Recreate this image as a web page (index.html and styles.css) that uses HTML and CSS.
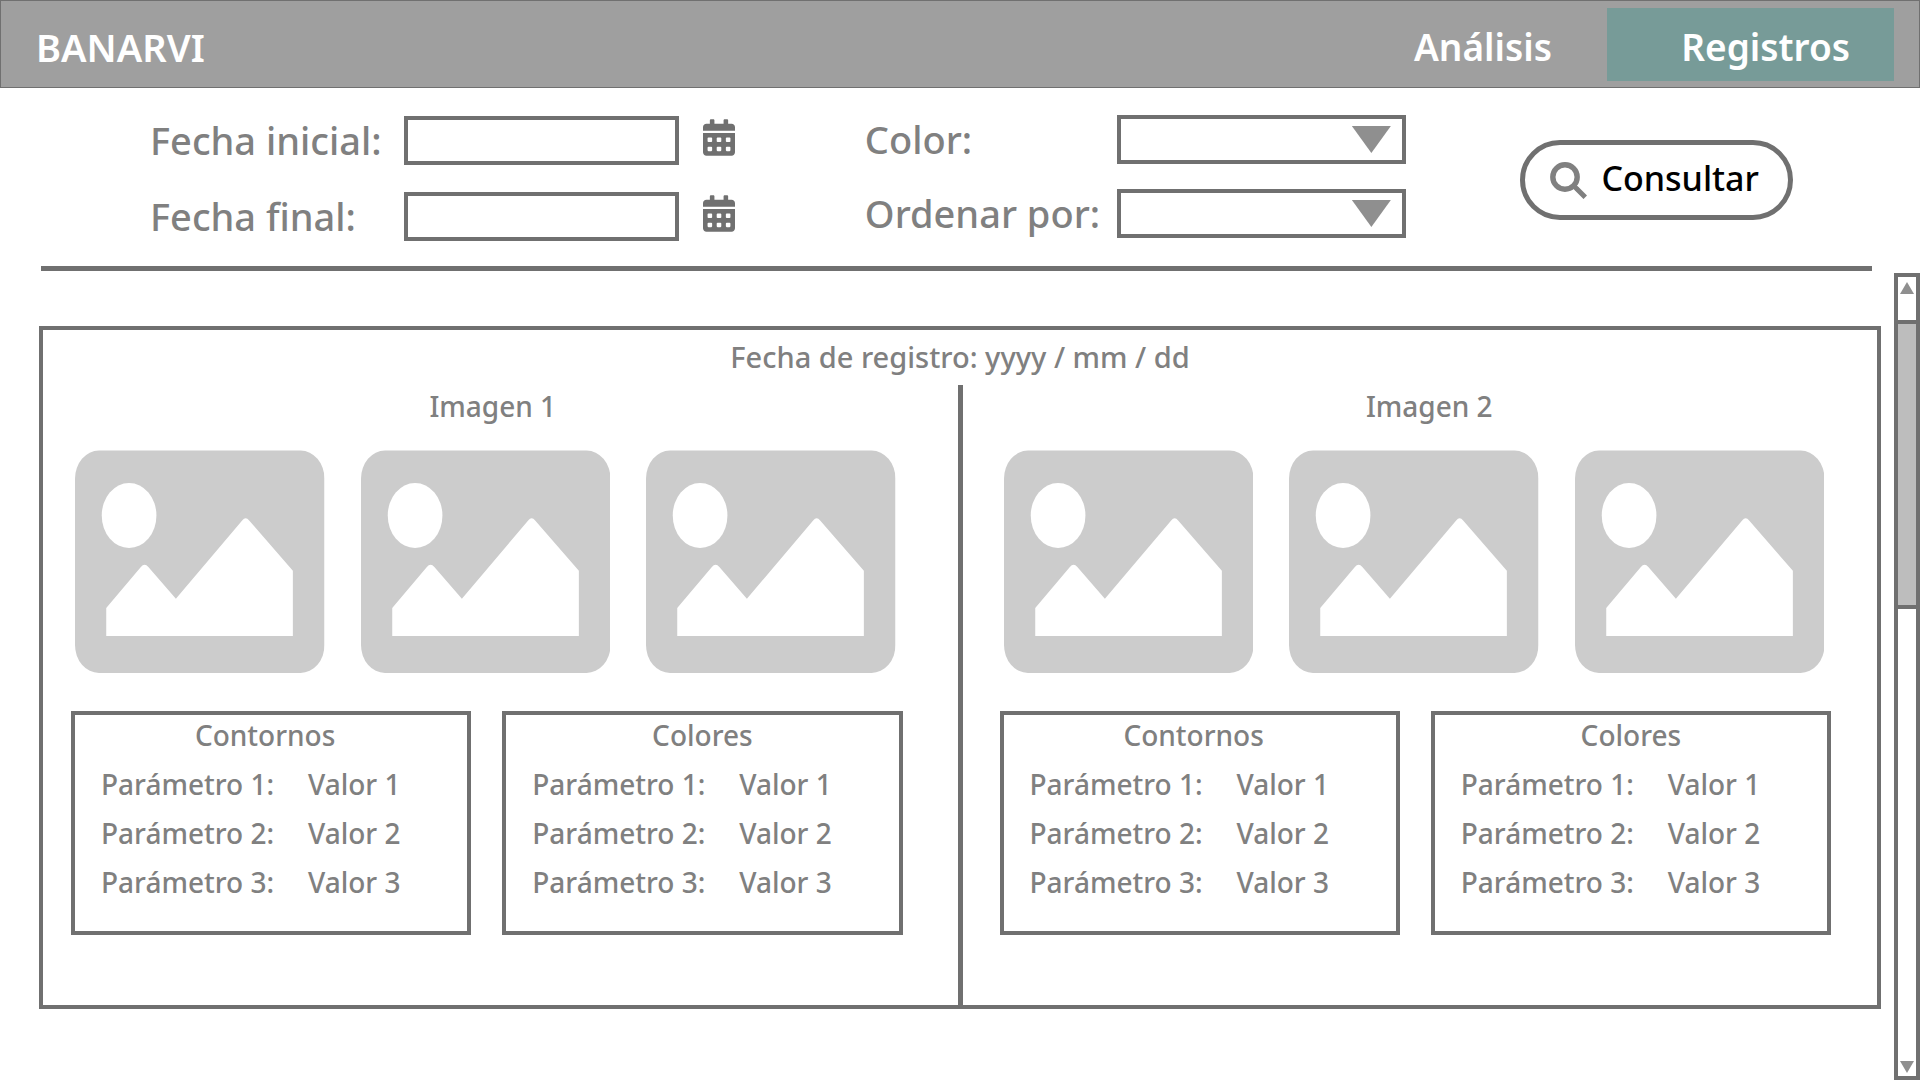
FILE: index.html
```
<!DOCTYPE html>
<html lang="es">
<head>
  <meta charset="utf-8">
  <meta name="viewport" content="width=device-width, initial-scale=1">
  <title>BANARVI - Registros</title>
  <link rel="stylesheet" href="styles.css">
</head>
<body>
  <svg class="sprite" aria-hidden="true">
    <symbol id="calendar" viewBox="0 0 448 512">
      <path d="M0 464c0 26.500 21.500 48 48 48h352c26.500 0 48-21.500 48-48V192H0v272zm320-196c0-6.600 5.400-12 12-12h40c6.600 0 12 5.400 12 12v40c0 6.600-5.400 12-12 12h-40c-6.600 0-12-5.400-12-12v-40zm0 128c0-6.600 5.400-12 12-12h40c6.600 0 12 5.400 12 12v40c0 6.600-5.400 12-12 12h-40c-6.600 0-12-5.400-12-12v-40zM192 268c0-6.600 5.400-12 12-12h40c6.600 0 12 5.400 12 12v40c0 6.600-5.400 12-12 12h-40c-6.600 0-12-5.400-12-12v-40zm0 128c0-6.600 5.400-12 12-12h40c6.600 0 12 5.400 12 12v40c0 6.600-5.400 12-12 12h-40c-6.600 0-12-5.400-12-12v-40zM64 268c0-6.600 5.400-12 12-12h40c6.600 0 12 5.400 12 12v40c0 6.600-5.400 12-12 12H76c-6.600 0-12-5.400-12-12v-40zm0 128c0-6.600 5.400-12 12-12h40c6.600 0 12 5.400 12 12v40c0 6.600-5.400 12-12 12H76c-6.600 0-12-5.400-12-12v-40zM400 64h-48V16c0-8.800-7.200-16-16-16h-32c-8.800 0-16 7.200-16 16v48H160V16c0-8.800-7.200-16-16-16h-32c-8.800 0-16 7.200-16 16v48H48C21.500 64 0 85.500 0 112v48h448v-48c0-26.500-21.500-48-48-48z"/>
    </symbol>
    <symbol id="picture" viewBox="0 0 250 223" preserveAspectRatio="none">
      <rect y="0.600" width="250" height="222.400" rx="24" ry="28" fill="#ccc"/>
      <ellipse cx="54.200" cy="65.500" rx="27.400" ry="32.500" fill="#fff"/>
      <path fill="#fff" d="M31.300 158 66 117Q69.700 112.500 73.500 117L101.100 148.700 167.500 70.500Q171 66 174.500 70.500L218.300 120.700V186H31.300Z"/>
    </symbol>
  </svg>

  <header class="topbar">
    <a class="brand" href="#">BANARVI</a>
    <nav class="nav">
      <a class="nav-link" href="#">Análisis</a>
      <a class="nav-link nav-link--active" href="#" aria-current="page">Registros</a>
    </nav>
  </header>

  <form class="filters">
    <div class="fields fields--dates">
      <label for="start">Fecha inicial:</label>
      <input class="box" id="start" type="text">
      <button class="icon-button" type="button" aria-label="Elegir fecha inicial"><svg class="calendar-icon"><use href="#calendar"/></svg></button>
      <label for="end">Fecha final:</label>
      <input class="box" id="end" type="text">
      <button class="icon-button" type="button" aria-label="Elegir fecha final"><svg class="calendar-icon"><use href="#calendar"/></svg></button>
    </div>
    <div class="fields fields--options">
      <label for="color">Color:</label>
      <div class="select"><select class="box" id="color"><option></option></select></div>
      <label for="order">Ordenar por:</label>
      <div class="select"><select class="box" id="order"><option></option></select></div>
    </div>
    <div class="actions">
      <button class="submit" type="submit">
        <svg class="search-icon" viewBox="0 0 37 37" aria-hidden="true">
          <circle cx="15" cy="15" r="12.200" fill="none" stroke="currentColor" stroke-width="5.400"/>
          <path d="M23 23 28 28" fill="none" stroke="currentColor" stroke-width="4"/>
          <path d="M27.500 27.500 33.500 33.500" fill="none" stroke="currentColor" stroke-width="5" stroke-linecap="square"/>
        </svg>
        <span class="submit-text">Consultar</span>
      </button>
    </div>
  </form>
  <hr class="rule">

  <div class="results">
    <main class="records">
      <article class="record">
        <h1 class="record-title">Fecha de registro: yyyy / mm / dd</h1>
        <div class="captures">
          <section class="capture capture--first">
            <h2 class="capture-title">Imagen 1</h2>
            <div class="pictures">
              <svg class="picture" role="img"><use href="#picture"/></svg>
              <svg class="picture" role="img"><use href="#picture"/></svg>
              <svg class="picture" role="img"><use href="#picture"/></svg>
            </div>
            <div class="cards">
              <section class="card card--contours">
                <h3 class="card-title">Contornos</h3>
                <table class="params">
                  <tr><th scope="row">Parámetro 1:</th><td>Valor 1</td></tr>
                  <tr><th scope="row">Parámetro 2:</th><td>Valor 2</td></tr>
                  <tr><th scope="row">Parámetro 3:</th><td>Valor 3</td></tr>
                </table>
              </section>
              <section class="card">
                <h3 class="card-title">Colores</h3>
                <table class="params">
                  <tr><th scope="row">Parámetro 1:</th><td>Valor 1</td></tr>
                  <tr><th scope="row">Parámetro 2:</th><td>Valor 2</td></tr>
                  <tr><th scope="row">Parámetro 3:</th><td>Valor 3</td></tr>
                </table>
              </section>
            </div>
          </section>
          <div class="divider"></div>
          <section class="capture capture--second">
            <h2 class="capture-title">Imagen 2</h2>
            <div class="pictures">
              <svg class="picture" role="img"><use href="#picture"/></svg>
              <svg class="picture" role="img"><use href="#picture"/></svg>
              <svg class="picture" role="img"><use href="#picture"/></svg>
            </div>
            <div class="cards">
              <section class="card card--contours">
                <h3 class="card-title">Contornos</h3>
                <table class="params">
                  <tr><th scope="row">Parámetro 1:</th><td>Valor 1</td></tr>
                  <tr><th scope="row">Parámetro 2:</th><td>Valor 2</td></tr>
                  <tr><th scope="row">Parámetro 3:</th><td>Valor 3</td></tr>
                </table>
              </section>
              <section class="card">
                <h3 class="card-title">Colores</h3>
                <table class="params">
                  <tr><th scope="row">Parámetro 1:</th><td>Valor 1</td></tr>
                  <tr><th scope="row">Parámetro 2:</th><td>Valor 2</td></tr>
                  <tr><th scope="row">Parámetro 3:</th><td>Valor 3</td></tr>
                </table>
              </section>
            </div>
          </section>
        </div>
      </article>
    </main>
    <div class="scrollbar">
      <button class="scroll-button" type="button" aria-label="Subir"><span class="arrow arrow--up"></span></button>
      <div class="thumb"></div>
      <button class="scroll-button scroll-button--down" type="button" aria-label="Bajar"><span class="arrow arrow--down"></span></button>
    </div>
  </div>
</body>
</html>
```
FILE: styles.css
```
:root {
  --line: #707070;
  --text: #808080;
  --arrow: #8f8f8f;
}

* {
  box-sizing: border-box;
}

body {
  margin: 0;
  min-height: 100vh;
  display: flex;
  flex-direction: column;
  background: #fff;
  color: var(--text);
  font-family: "Noto Sans", sans-serif;
  font-weight: 500;
}

h1, h2, h3 {
  margin: 0;
  font-size: 28px;
  font-weight: 500;
  text-align: center;
}

button {
  padding: 0;
  border: 0;
  background: none;
  font: inherit;
  cursor: pointer;
}

.sprite {
  display: none;
}

/* Top bar */
.topbar {
  display: flex;
  justify-content: space-between;
  height: 88px;
  padding: 7px 25px 6px 35px;
  border: 1px solid var(--line);
  background: #9f9f9f;
}

.brand,
.nav-link {
  display: flex;
  align-items: center;
  padding-top: 4px;
  color: #fff;
  font-size: 37px;
  font-weight: 600;
  text-decoration: none;
}

.brand {
  font-size: 38px;
}

.nav {
  display: flex;
  gap: 55px;
}

.nav-link--active {
  width: 287px;
  justify-content: flex-end;
  padding-right: 44px;
  background: #779b98;
}

/* Filters */
.filters {
  display: grid;
  grid-template-columns: 714fr 654fr 273fr;
  align-items: start;
  padding: 27px 127px 25px 150px;
}

.fields {
  display: grid;
  align-items: center;
  font-size: 38px;
  line-height: 49px;
  white-space: nowrap;
}

.fields--dates {
  grid-template-columns: 254px 275px auto;
  justify-content: start;
  row-gap: 27px;
  padding-top: 1px;
}

.fields--options {
  grid-template-columns: 252px 289px;
  row-gap: 25px;
}

.box {
  width: 100%;
  height: 49px;
  padding: 0 8px;
  border: 4px solid var(--line);
  border-radius: 0;
  background: #fff;
  color: var(--text);
  font: inherit;
  font-size: 28px;
  appearance: none;
}

.icon-button {
  height: 37px;
  margin: 0 0 6px 24px;
}

.calendar-icon {
  display: block;
  width: 32px;
  height: 37px;
  fill: var(--line);
}

.select {
  display: grid;
  align-items: center;
}

.select::after,
.select .box {
  grid-area: 1 / 1;
}

.select::after {
  content: "";
  justify-self: end;
  width: 39px;
  height: 27px;
  margin-right: 15px;
  background: var(--arrow);
  clip-path: polygon(0 0, 100% 0, 50% 100%);
  pointer-events: none;
}

.actions {
  align-self: center;
  padding-top: 4px;
}

.submit {
  display: flex;
  align-items: center;
  justify-content: center;
  gap: 14px;
  width: 273px;
  height: 80px;
  padding-right: 3px;
  border: 5px solid var(--line);
  border-radius: 40px;
  background: #fff;
  color: #000;
  font-size: 34px;
}

.submit-text {
  padding-bottom: 4px;
}

.search-icon {
  width: 37px;
  height: 37px;
  color: var(--text);
}

.rule {
  width: auto;
  height: 5px;
  margin: 0 48px 2px 41px;
  border: 0;
  background: var(--line);
}

/* Results */
.results {
  flex: 1;
  display: flex;
}

.records {
  flex: 1;
  padding: 53px 13px 0 39px;
}

.record {
  border: 4px solid var(--line);
}

.record-title {
  margin-bottom: 2px;
  font-size: 29px;
  line-height: 53px;
}

.captures {
  display: grid;
  grid-template-columns: 1fr 5px 1fr;
}

.divider {
  background: var(--line);
}

.capture--first {
  padding: 0 55px 70px 28px;
}

.capture--second {
  padding: 0 46px 70px 37px;
}

.capture-title {
  padding-left: 12px;
  line-height: 42px;
}

.capture--second .capture-title {
  padding-left: 28px;
}

.pictures {
  display: grid;
  grid-template-columns: repeat(3, 1fr);
  gap: 36px;
  padding: 23px 7px 38px 4px;
}

.picture {
  display: block;
  width: 100%;
  height: 223px;
}

.cards {
  display: grid;
  grid-template-columns: 1fr 1fr;
  gap: 31px;
}

.card {
  padding-bottom: 24px;
  border: 4px solid var(--line);
}

.card-title {
  margin-bottom: 5px;
  line-height: 40px;
}

.card--contours .card-title {
  padding-right: 12px;
}

.params {
  width: 100%;
  border-collapse: collapse;
  font-size: 28px;
  line-height: 49px;
  white-space: nowrap;
}

.params th,
.params td {
  padding: 0;
  font-weight: 500;
  text-align: left;
}

.params th {
  width: 233px;
  padding-left: 26px;
}

/* Scrollbar */
.scrollbar {
  display: flex;
  flex-direction: column;
  width: 26px;
  border: 4px solid var(--line);
}

.scroll-button {
  display: flex;
  height: 43px;
  padding: 5px 2px 0;
}

.scroll-button--down {
  height: auto;
  margin-top: auto;
  padding: 0 2px 3px;
}

.thumb {
  height: 289px;
  border: solid var(--line);
  border-width: 4px 0;
  background: #bdbdbd;
}

.arrow {
  width: 14px;
  height: 12px;
  background: var(--arrow);
}

.arrow--up {
  clip-path: polygon(50% 0, 100% 100%, 0 100%);
}

.arrow--down {
  clip-path: polygon(0 0, 100% 0, 50% 100%);
}
```
